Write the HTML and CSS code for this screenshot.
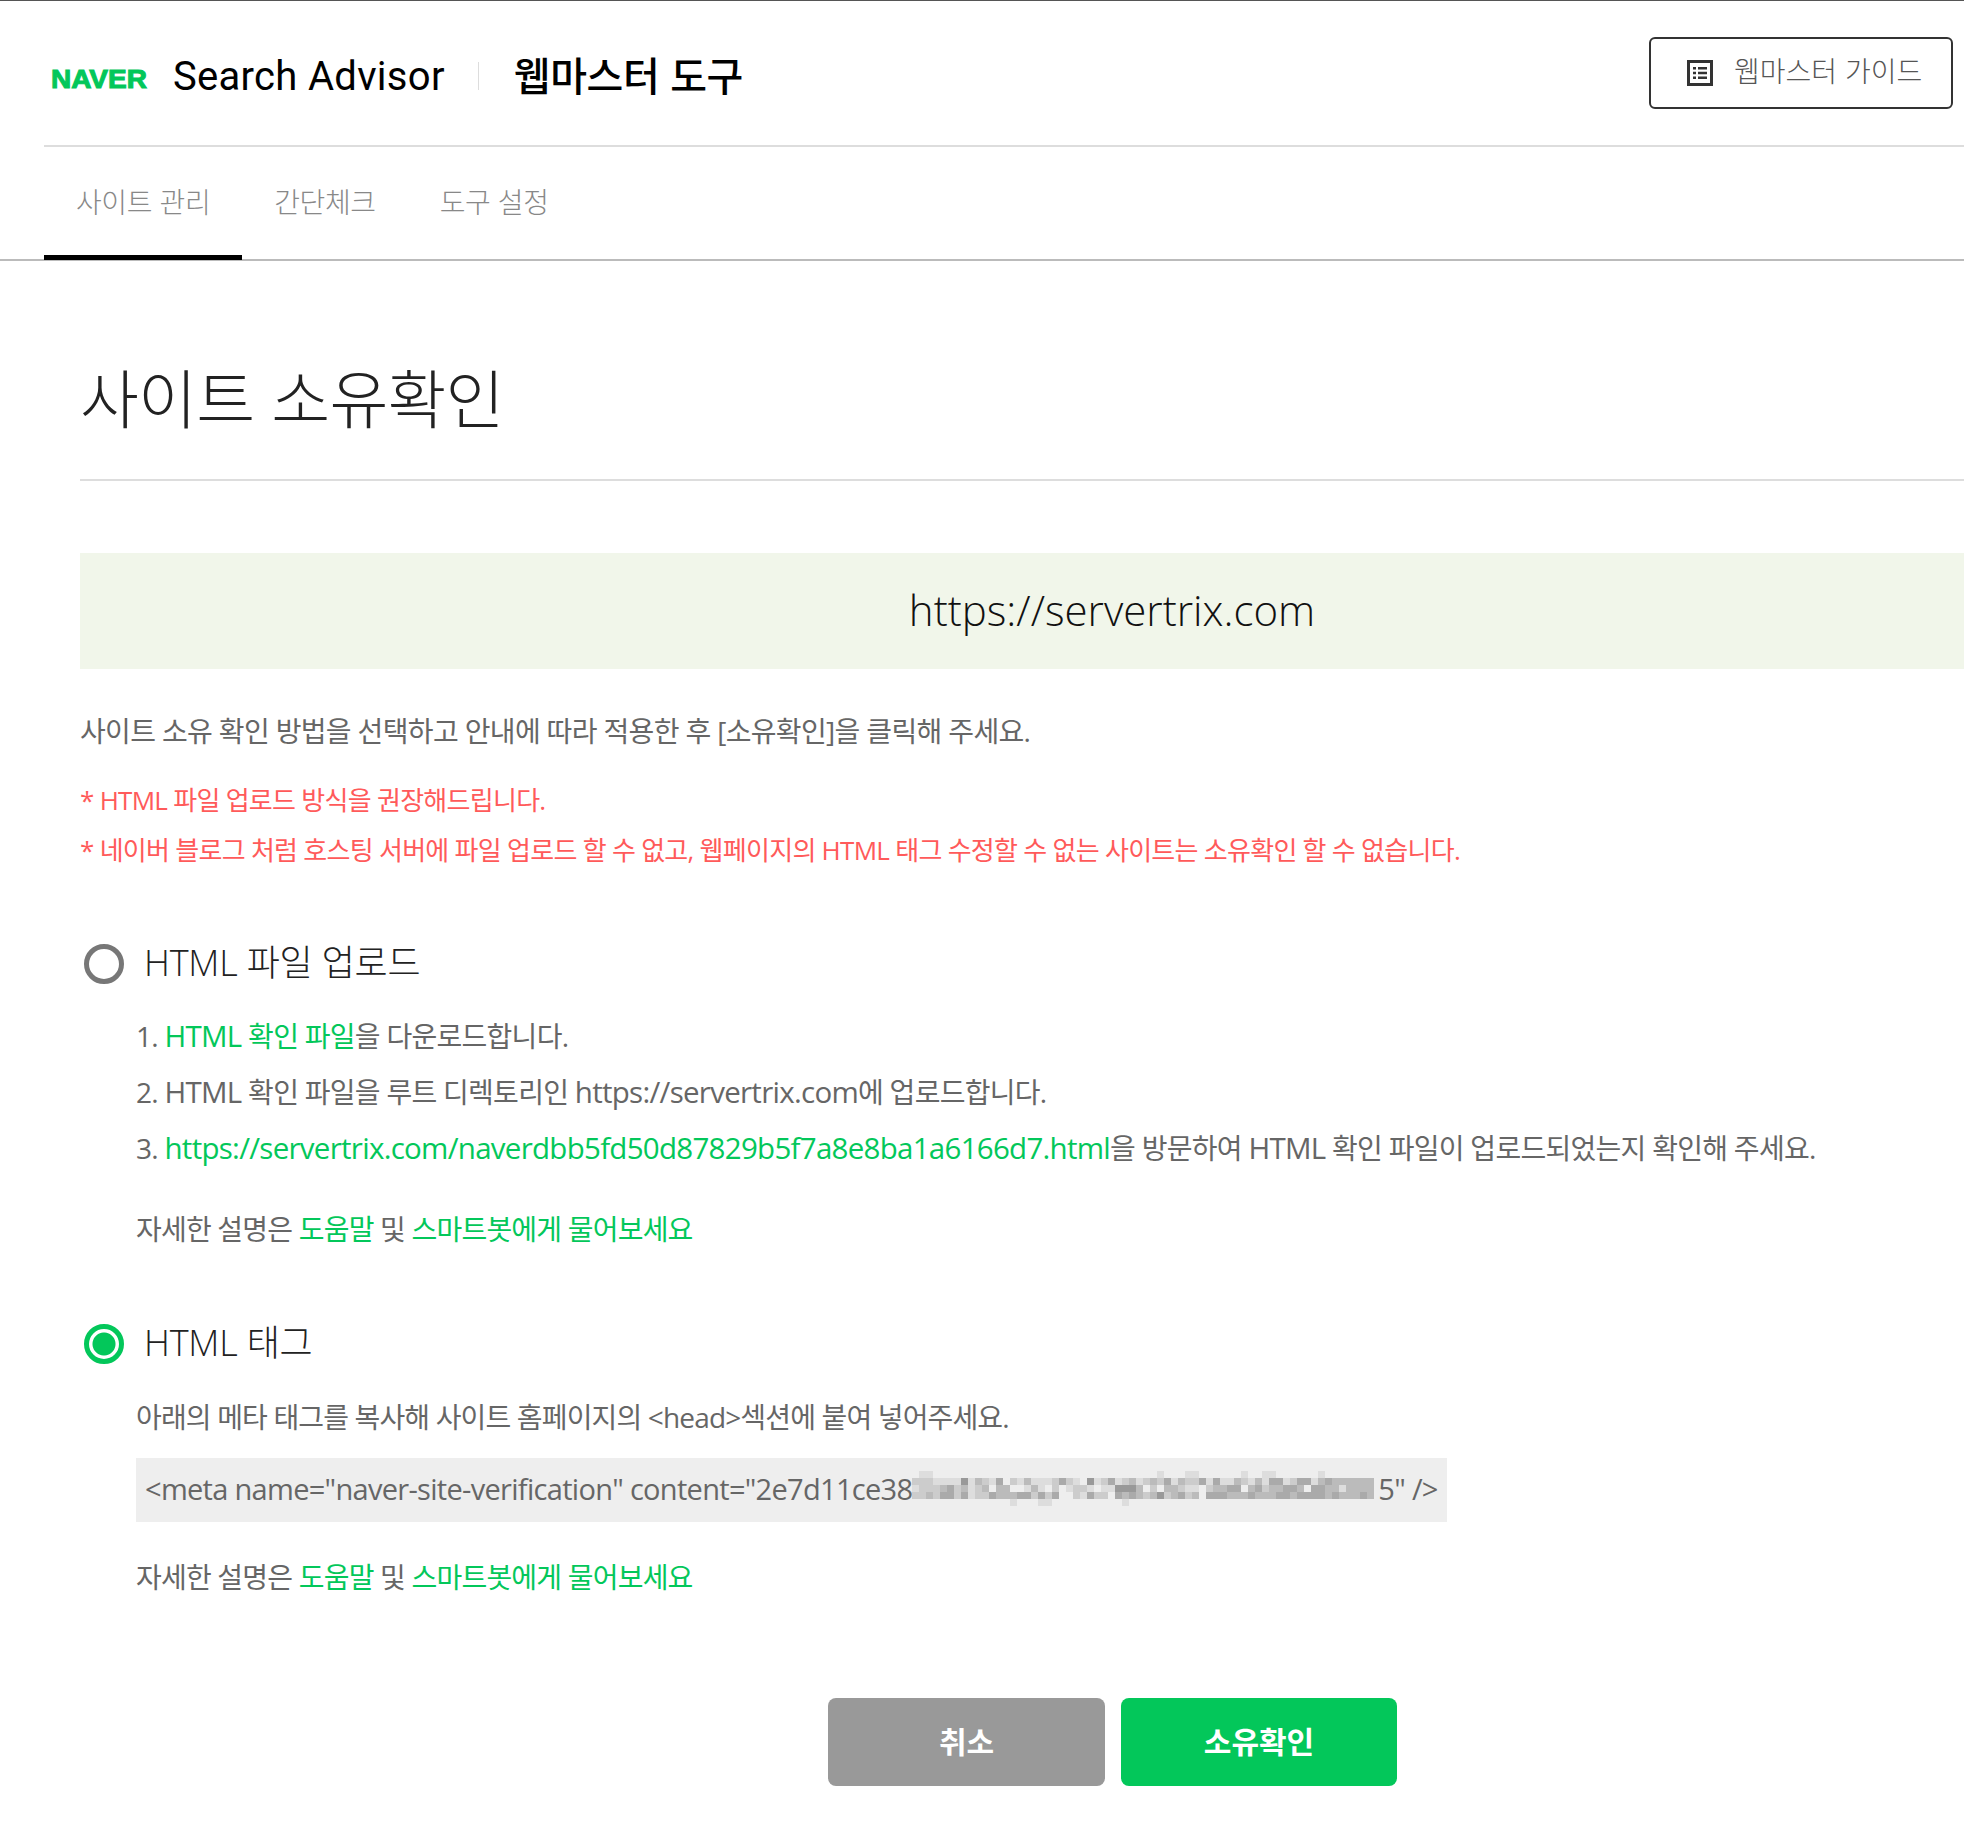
FILE: index.html
```html
<!DOCTYPE html>
<html lang="ko">
<head>
    <meta charset="UTF-8">
    <title>Search Advisor - 사이트 소유확인</title>
    <link rel="stylesheet" href="styles.css">
</head>
<body>
    <header class="top-bar">
        <div class="brand">
            <span class="naver-logo">NAVER</span>
            <span class="brand-name">Search Advisor</span>
            <span class="brand-sep"></span>
            <span class="brand-tool">웹마스터 도구</span>
        </div>
        <a class="guide-btn" href="#">
            <svg class="guide-icon" viewBox="0 0 26 26" width="26" height="26">
                <rect x="1.5" y="1.5" width="23" height="23" fill="none" stroke="#333" stroke-width="3"/>
                <path d="M6 7h3v2.4H6zM6 11.8h3v2.4H6zM6 16.6h3V19H6zM11 7h9v2.4h-9zM11 11.8h9v2.4h-9zM11 16.6h9V19h-9z" fill="#333"/>
            </svg>
            <span class="guide-text">웹마스터 가이드</span>
        </a>
    </header>

    <nav class="tabs">
        <a class="tab active" href="#">사이트 관리</a>
        <a class="tab" href="#">간단체크</a>
        <a class="tab" href="#">도구 설정</a>
    </nav>

    <main class="content">
        <h1 class="page-title">사이트 소유확인</h1>
        <div class="site-url">https://servertrix.com</div>
        <p class="intro">사이트 소유 확인 방법을 선택하고 안내에 따라 적용한 후 [소유확인]을 클릭해 주세요.</p>
        <p class="note">* HTML 파일 업로드 방식을 권장해드립니다.</p>
        <p class="note">* 네이버 블로그 처럼 호스팅 서버에 파일 업로드 할 수 없고, 웹페이지의 HTML 태그 수정할 수 없는 사이트는 소유확인 할 수 없습니다.</p>

        <section class="method">
            <label class="method-label"><span class="radio"></span><span class="label-text">HTML 파일 업로드</span></label>
            <ol class="steps">
                <li>1. <a href="#"><span class="en">HTML</span> 확인 파일</a>을 다운로드합니다.</li>
                <li>2. <span class="en">HTML</span> 확인 파일을 루트 디렉토리인 <span class="en">https://servertrix.com</span>에 업로드합니다.</li>
                <li>3. <a class="en" href="#">https://servertrix.com/naverdbb5fd50d87829b5f7a8e8ba1a6166d7.html</a>을 방문하여 <span class="en">HTML</span> 확인 파일이 업로드되었는지 확인해 주세요.</li>
            </ol>
            <p class="help">자세한 설명은 <a href="#">도움말</a> 및 <a href="#">스마트봇에게 물어보세요</a></p>
        </section>

        <section class="method method-tag">
            <label class="method-label"><span class="radio checked"></span><span class="label-text">HTML 태그</span></label>
            <p class="tag-desc">아래의 메타 태그를 복사해 사이트 홈페이지의 &lt;head&gt;섹션에 붙여 넣어주세요.</p>
            <div class="code-box">
                <span>&lt;meta name="naver-site-verification" content="2e7d11ce38</span>
                <svg class="mosaic" id="mosaic" viewBox="0 0 66 5" width="462" height="35" shape-rendering="crispEdges"></svg>
                <span class="code-end">5" /&gt;</span>
            </div>
            <p class="help">자세한 설명은 <a href="#">도움말</a> 및 <a href="#">스마트봇에게 물어보세요</a></p>
        </section>

        <div class="actions">
            <button class="btn btn-cancel" type="button">취소</button>
            <button class="btn btn-confirm" type="button">소유확인</button>
        </div>
    </main>
    <script src="mosaic.js"></script>
</body>
</html>
```

FILE: styles.css
```css
html, body {
    margin: 0;
    overflow-x: hidden;
}

body {
    width: 1964px;
    font-family: "Open Sans", "Noto Sans CJK KR", sans-serif;
    font-weight: 400;
    color: #666;
    background: #fff;
    border-top: 1px solid #555;
}

a {
    color: inherit;
    text-decoration: none;
}

p {
    margin: 0;
}

.top-bar {
    display: flex;
    justify-content: space-between;
    align-items: center;
    height: 144px;
    margin-left: 44px;
    padding-right: 11px;
    border-bottom: 2px solid #ddd;
}

.brand {
    display: flex;
    align-items: center;
    padding: 6px 0 0 7px;
    color: #000;
}

.naver-logo {
    width: 96px;
    margin-top: 6px;
    font-family: "Liberation Sans", sans-serif;
    font-weight: 700;
    font-size: 25px;
    color: #03c75a;
    -webkit-text-stroke: 1px #03c75a;
    transform: scaleX(1.12);
    transform-origin: left;
}

.brand-name {
    margin-left: 26px;
    font-family: "Roboto", sans-serif;
    font-weight: 400;
    font-size: 40px;
    letter-spacing: 0.3px;
}

.brand-sep {
    width: 1px;
    height: 28px;
    margin: 0 35px 0 33px;
    background: #ddd;
}

.brand-tool {
    margin-top: -4px;
    font-family: "Noto Sans CJK KR", sans-serif;
    font-weight: 500;
    font-size: 40px;
    letter-spacing: -0.4px;
}

.guide-btn {
    display: flex;
    align-items: center;
    gap: 21px;
    box-sizing: border-box;
    width: 304px;
    height: 72px;
    margin-top: -1px;
    padding-left: 36px;
    border: 2px solid #333;
    border-radius: 6px;
    font-family: "Noto Sans CJK KR", sans-serif;
    font-weight: 300;
    font-size: 28px;
    color: #555;
}

.guide-text {
    margin-top: -5px;
}

.tabs {
    display: flex;
    height: 112px;
    padding-left: 44px;
    border-bottom: 2px solid #bbb;
}

.tab {
    padding: 0 32px;
    font-family: "Noto Sans CJK KR", sans-serif;
    font-weight: 300;
    font-size: 28px;
    line-height: 108px;
    letter-spacing: -0.4px;
    color: #888;
}

.tab.active {
    border-bottom: 5px solid #000;
    margin-bottom: -1px;
}

.content {
    width: 2064px;
    margin-left: 80px;
}

.page-title {
    box-sizing: border-box;
    margin: 0;
    height: 220px;
    padding-top: 24px;
    line-height: 220px;
    overflow: hidden;
    font-family: "Noto Sans CJK KR", sans-serif;
    font-size: 64px;
    font-weight: 300;
    letter-spacing: -0.8px;
    color: #222;
    border-bottom: 2px solid #ddd;
}

.site-url {
    margin-top: 72px;
    height: 116px;
    line-height: 114px;
    text-align: center;
    font-weight: 300;
    font-size: 42px;
    color: #111;
    background: #f1f6ea;
}

.intro {
    margin-top: 42px;
    font-size: 28px;
    line-height: 40px;
    letter-spacing: -0.65px;
}

.note {
    margin-top: 10px;
    font-size: 26px;
    line-height: 40px;
    letter-spacing: -0.72px;
    color: #ff5a5a;
}

.intro + .note {
    margin-top: 29px;
}

.method {
    margin-top: 69px;
}

.method-label {
    display: flex;
    align-items: center;
    height: 50px;
    font-size: 36px;
    color: #222;
}

.label-text {
    margin-top: -8px;
    font-weight: 300;
    letter-spacing: -0.2px;
}

.radio {
    box-sizing: border-box;
    width: 40px;
    height: 40px;
    margin: 0 20px 0 4px;
    border: 5px solid #777;
    border-radius: 50%;
}

.radio.checked {
    border-color: #03c75a;
    background: radial-gradient(circle, #03c75a 0 11px, #fff 12px);
}

.steps {
    margin: 19px 0 0;
    padding: 0 0 0 56px;
    list-style: none;
    font-size: 28px;
    line-height: 56px;
    letter-spacing: -0.72px;
}

.steps a,
.help a {
    color: #03c75a;
}

.en {
    font-size: 29.5px;
}

.help {
    margin: 29px 0 0 56px;
    font-size: 28px;
    line-height: 48px;
    letter-spacing: -0.8px;
}

.method-tag {
    margin-top: 66px;
}

.tag-desc {
    margin: 28px 0 0 56px;
    font-size: 28px;
    line-height: 40px;
    letter-spacing: -0.85px;
}

.code-box {
    display: flex;
    align-items: center;
    box-sizing: border-box;
    width: 1311px;
    height: 64px;
    margin: 21px 0 0 56px;
    padding: 0 0 4px 9px;
    font-size: 29px;
    letter-spacing: -0.7px;
    background: #eee;
    white-space: nowrap;
}

.mosaic {
    flex: none;
}

.code-end {
    margin-left: 4px;
}

.method-tag .help {
    margin-top: 31px;
}

.actions {
    display: flex;
    gap: 16px;
    margin: 97px 0 0 748px;
}

.btn {
    width: 277px;
    height: 88px;
    padding-bottom: 6px;
    border: 0;
    border-radius: 8px;
    font-family: "Noto Sans CJK KR", sans-serif;
    font-size: 30px;
    font-weight: 700;
    color: #fff;
}

.btn-cancel {
    background: #999;
}

.btn-confirm {
    width: 276px;
    background: #03c75a;
}
```

FILE: mosaic.js
```js
// blurred part of the meta tag, one hex digit per cell (e = same as the box)
const rows = [
    "edd" + "e".repeat(32) + "deeeddeeeeeedeeddeeeeeedeeeeeeeeee",
    "cccdddd9dbcdaecdbdddcacde9dcadcb" + "dcbcadbccadaddbcdbdaadcaadbabbbbbb",
    "dcccbacbdcbebbeedbdecedccdedd999" + "becebbcddecbbaaebacbbaabeaabbdbbbb",
    "ccbcaacadccabbbaacacaeecdacceaba" + "bcb9cbacbeaaabbbabbbaabaaaababbbab",
    "e".repeat(14) + "deeeddeeeeeeeeeed" + "e".repeat(34)
];

const svg = document.getElementById("mosaic");
rows.forEach(function (row, y) {
    row.split("").forEach(function (digit, x) {
        if (digit === "e") return;
        const cell = document.createElementNS("http://www.w3.org/2000/svg", "rect");
        cell.setAttribute("x", x);
        cell.setAttribute("y", y);
        cell.setAttribute("width", 1);
        cell.setAttribute("height", 1);
        cell.setAttribute("fill", "#" + digit + digit + digit);
        svg.appendChild(cell);
    });
});
```
